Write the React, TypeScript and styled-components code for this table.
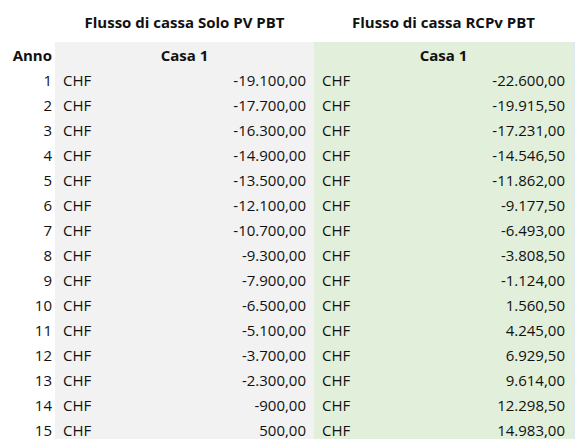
import React from "react";
import styled, { createGlobalStyle } from "styled-components";

const Global = createGlobalStyle`
  html, body { margin: 0; padding: 0; background: #ffffff; }
  body { font-family: "Open Sans", "Noto Sans", sans-serif; font-size: 15px; color: #111; }
`;

const Sheet = styled.div`
  display: flex;
  flex-direction: column;
  width: 575px;
  height: 439px;
  overflow: hidden;
`;

const Row = styled.div<{ $h: number }>`
  display: grid;
  grid-template-columns: 55px 259px 259px 1fr;
  height: ${(p) => p.$h}px;
  flex: none;
`;

const YearCell = styled.div<{ $bold?: boolean }>`
  display: flex;
  align-items: center;
  justify-content: flex-end;
  padding-right: 3px;
  font-weight: ${(p) => (p.$bold ? 700 : 400)};
`;

const Title = styled.div`
  display: flex;
  align-items: center;
  justify-content: center;
  font-weight: 700;
  padding-top: 2px;
`;

const HeadCell = styled.div<{ $bg: string }>`
  display: flex;
  align-items: center;
  justify-content: center;
  font-weight: 700;
  background: ${(p) => p.$bg};
`;

const MoneyCell = styled.div<{ $bg: string }>`
  display: flex;
  align-items: center;
  justify-content: space-between;
  padding: 0 8px;
  background: ${(p) => p.$bg};
`;

const Edge = styled.div<{ $bg: string }>`
  background: ${(p) => p.$bg};
`;

const GRAY = "#f2f2f2";
const GREEN = "#e2efda";
const BLUE = "#dde9f6";

const pv = [
  "-19.100,00", "-17.700,00", "-16.300,00", "-14.900,00", "-13.500,00",
  "-12.100,00", "-10.700,00", "-9.300,00", "-7.900,00", "-6.500,00",
  "-5.100,00", "-3.700,00", "-2.300,00", "-900,00", "500,00",
];
const rc = [
  "-22.600,00", "-19.915,50", "-17.231,00", "-14.546,50", "-11.862,00",
  "-9.177,50", "-6.493,00", "-3.808,50", "-1.124,00", "1.560,50",
  "4.245,00", "6.929,50", "9.614,00", "12.298,50", "14.983,00",
];

export default function App() {
  return (
    <>
      <Global />
      <Sheet>
        <Row $h={42}>
          <div />
          <Title>Flusso di cassa Solo PV PBT</Title>
          <Title>Flusso di cassa RCPv PBT</Title>
          <div />
        </Row>
        <Row $h={25}>
          <YearCell $bold>Anno</YearCell>
          <HeadCell $bg={GRAY}>Casa 1</HeadCell>
          <HeadCell $bg={GREEN}>Casa 1</HeadCell>
          <Edge $bg={BLUE} />
        </Row>
        {pv.map((v, i) => (
          <Row $h={25} key={i}>
            <YearCell>{i + 1}</YearCell>
            <MoneyCell $bg={GRAY}>
              <span>CHF</span>
              <span>{v}</span>
            </MoneyCell>
            <MoneyCell $bg={GREEN}>
              <span>CHF</span>
              <span>{rc[i]}</span>
            </MoneyCell>
            <Edge $bg={BLUE} />
          </Row>
        ))}
      </Sheet>
    </>
  );
}
